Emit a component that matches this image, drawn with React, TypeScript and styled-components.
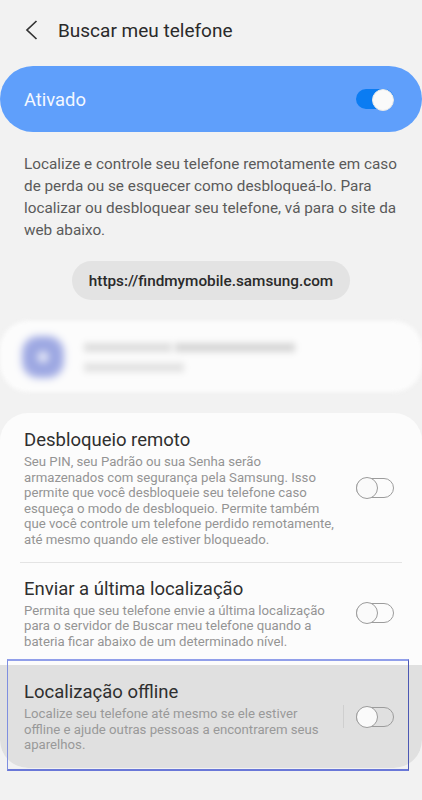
import React from "react";
import styled, {createGlobalStyle} from "styled-components";

const GlobalStyle = createGlobalStyle`
  html, body {
    margin: 0;
    padding: 0;
    background: #f2f2f2;
    font-family: Roboto, "Liberation Sans", sans-serif;
  }
`;

const Page = styled.div`
  width: 422px;
  height: 800px;
  overflow: hidden;
  background: #f2f2f2;
`;

const Header = styled.header`
  display: flex;
  align-items: center;
  height: 66px;
  padding: 0 0 6px 24px;
  box-sizing: border-box;
  gap: 19px;
`;

const Title = styled.h1`
  margin: 0;
  font-size: 19px;
  font-weight: 400;
  color: #2a2a2a;
`;

const MasterCard = styled.div`
  display: flex;
  align-items: center;
  justify-content: space-between;
  height: 66px;
  padding: 0 28px 0 24px;
  border-radius: 33px;
  background: #5f9ffb;
  color: #f4f8ff;
  font-size: 18.4px;
`;

const Description = styled.p`
  margin: 0;
  padding: 21px 24px 0;
  font-size: 15.3px;
  line-height: 22px;
  color: #5a5a5a;
`;

const LinkRow = styled.div`
  display: flex;
  justify-content: center;
  padding-top: 20px;
`;

const LinkPill = styled.div`
  display: flex;
  align-items: center;
  justify-content: center;
  width: 278px;
  height: 39px;
  border-radius: 20px;
  background: #e3e3e3;
  color: #2a2a2a;
  font-size: 15.3px;
  font-weight: 500;
`;

const AccountCard = styled.div`
  display: flex;
  align-items: center;
  gap: 20px;
  height: 71px;
  margin-top: 21px;
  padding-left: 22px;
  box-sizing: border-box;
  border-radius: 28px;
  background: #fcfcfc;
  filter: blur(2px);
`;

const AccountAvatar = styled.div`
  width: 42px;
  height: 42px;
  border-radius: 16px;
  background: radial-gradient(circle, #eef0fa 0 8%, #95a1df 30%, #a8b1e6 75%);
  filter: blur(3px);
`;

const AccountLines = styled.div`
  display: flex;
  flex-direction: column;
  gap: 11px;
  padding-top: 2px;
`;

const BlurLine = styled.div`
  display: flex;
  gap: 3px;
`;

const BlurSegment = styled.div<{$width: number; $shade: string}>`
  width: ${p => p.$width}px;
  height: 9px;
  background: ${p => p.$shade};
  filter: blur(2.5px);
`;

const SettingsCard = styled.section`
  margin-top: 21px;
  padding-top: 16px;
  height: 355px;
  box-sizing: border-box;
  border-radius: 28px;
  background: #fcfcfc;
`;

const SettingRow = styled.div<{$highlighted?: boolean}>`
  position: relative;
  display: flex;
  align-items: center;
  box-sizing: border-box;
  padding: 0 28px 0 24px;
  ${p => p.$highlighted && `
    height: 103px;
    margin-top: 16px;
    background: #e0e0e0;
    border-radius: 0 0 28px 28px;
  `}
`;

const SettingText = styled.div`
  flex: 1;
  min-width: 0;
`;

const SettingTitle = styled.div`
  font-size: 18.5px;
  line-height: 23px;
  margin-bottom: 2px;
  color: #2f2f2f;
`;

const SettingBody = styled.div<{$highlighted?: boolean}>`
  font-size: 13.2px;
  line-height: 15.6px;
  color: ${p => (p.$highlighted ? "#999" : "#949494")};
`;

const Divider = styled.div`
  height: 1px;
  margin: 14px 20px 15px;
  background: #e4e4e4;
`;

const VerticalRule = styled.div`
  width: 1px;
  height: 23px;
  margin-right: 12px;
  background: #cfcfcf;
`;

const Outline = styled.div`
  position: absolute;
  top: -6px;
  left: 7px;
  right: 13px;
  bottom: -3px;
  border-style: solid;
  border-width: 2px 1px 2px 1px;
  border-color: #919fea #4c58b4 #6a78d8 #7f8fe0;
  pointer-events: none;
`;

const SwitchTrack = styled.div<{$on?: boolean}>`
  position: relative;
  flex: none;
  width: 38px;
  height: 20px;
  box-sizing: border-box;
  border-radius: 10px;
  background: ${p => (p.$on ? "#0b7cf2" : "transparent")};
  border: ${p => (p.$on ? "none" : "1px solid #9c9c9c")};
`;

const SwitchKnob = styled.div<{$on?: boolean}>`
  position: absolute;
  top: ${p => (p.$on ? "0" : "-2px")};
  ${p => (p.$on ? "right: 0;" : "left: -1px;")}
  width: 22px;
  height: 22px;
  box-sizing: border-box;
  border-radius: 50%;
  background: #fafafa;
  border: 1px solid ${p => (p.$on ? "#e8e8e8" : "#9c9c9c")};
`;

const Switch: React.FC<{on?: boolean}> = ({on}) => (
    <SwitchTrack $on={on}>
        <SwitchKnob $on={on}/>
    </SwitchTrack>
);

export default function App() {
    return (
        <Page>
            <GlobalStyle/>
            <Header>
                <svg width="15" height="22" viewBox="0 0 15 22" fill="none">
                    <path d="M12.5 2 L3 11 L12.5 20" stroke="#333" strokeWidth="1.7"/>
                </svg>
                <Title>Buscar meu telefone</Title>
            </Header>
            <MasterCard>
                Ativado
                <Switch on/>
            </MasterCard>
            <Description>
                Localize e controle seu telefone remotamente em caso de perda ou se esquecer como
                desbloqueá-lo. Para localizar ou desbloquear seu telefone, vá para o site da web abaixo.
            </Description>
            <LinkRow>
                <LinkPill>https://findmymobile.samsung.com</LinkPill>
            </LinkRow>
            <AccountCard>
                <AccountAvatar/>
                <AccountLines>
                    <BlurLine>
                        <BlurSegment $width={88} $shade="#dedede"/>
                        <BlurSegment $width={120} $shade="#d6d6d6"/>
                    </BlurLine>
                    <BlurLine>
                        <BlurSegment $width={100} $shade="#e2e2e2"/>
                    </BlurLine>
                </AccountLines>
            </AccountCard>
            <SettingsCard>
                <SettingRow>
                    <SettingText>
                        <SettingTitle>Desbloqueio remoto</SettingTitle>
                        <SettingBody>
                            Seu PIN, seu Padrão ou sua Senha serão<br/>
                            armazenados com segurança pela Samsung. Isso<br/>
                            permite que você desbloqueie seu telefone caso<br/>
                            esqueça o modo de desbloqueio. Permite também<br/>
                            que você controle um telefone perdido remotamente,<br/>
                            até mesmo quando ele estiver bloqueado.
                        </SettingBody>
                    </SettingText>
                    <Switch/>
                </SettingRow>
                <Divider/>
                <SettingRow>
                    <SettingText>
                        <SettingTitle>Enviar a última localização</SettingTitle>
                        <SettingBody>
                            Permita que seu telefone envie a última localização<br/>
                            para o servidor de Buscar meu telefone quando a<br/>
                            bateria ficar abaixo de um determinado nível.
                        </SettingBody>
                    </SettingText>
                    <Switch/>
                </SettingRow>
                <SettingRow $highlighted>
                    <SettingText>
                        <SettingTitle>Localização offline</SettingTitle>
                        <SettingBody $highlighted>
                            Localize seu telefone até mesmo se ele estiver<br/>
                            offline e ajude outras pessoas a encontrarem seus<br/>
                            aparelhos.
                        </SettingBody>
                    </SettingText>
                    <VerticalRule/>
                    <Switch/>
                    <Outline/>
                </SettingRow>
            </SettingsCard>
        </Page>
    );
}
